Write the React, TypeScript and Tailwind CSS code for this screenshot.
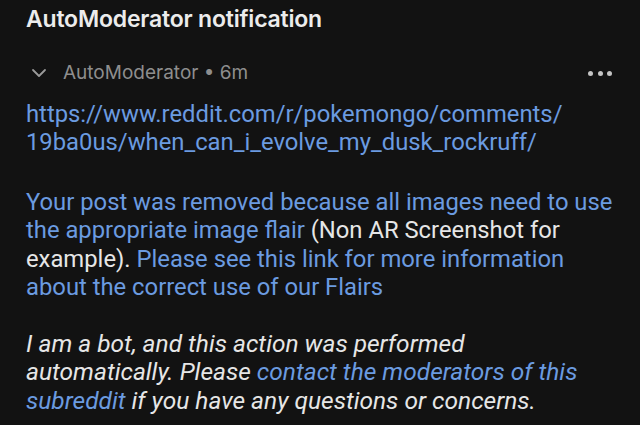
import React from "react";

export default function App() {
  const link = "text-[#6b9be0]";
  return (
    <div className="w-[640px] h-[425px] overflow-hidden bg-[#121212] text-[#e6e6e6] pl-[26px]" style={{ fontFamily: "Inter, 'Noto Sans', sans-serif" }}>
      <div className="pt-[5px] text-[23px] font-semibold leading-[28px] tracking-[-0.2px] text-[#ececec]">AutoModerator notification</div>
      <div className="mt-[28px] flex items-center h-[24px] pr-[28px] text-[19px] text-[#8e8e8e]">
        <svg width="16" height="10" viewBox="0 0 16 10" className="ml-[5px] mr-[16px]" fill="none" stroke="#9a9a9a" strokeWidth="1.8" strokeLinecap="round" strokeLinejoin="round">
          <path d="M2 2l6 6 6-6" />
        </svg>
        <span>AutoModerator • 6m</span>
        <div className="ml-auto flex gap-[4.5px]">
          <span className="w-[5px] h-[5px] rounded-full bg-[#c4c4c4]" />
          <span className="w-[5px] h-[5px] rounded-full bg-[#c4c4c4]" />
          <span className="w-[5px] h-[5px] rounded-full bg-[#c4c4c4]" />
        </div>
      </div>
      <div className="mt-[14.5px] text-[23.8px] leading-[28.5px] whitespace-nowrap" style={{ fontFamily: "Roboto, Inter, sans-serif" }}>
        <p className={link}>https://www.reddit.com/r/pokemongo/comments/<br />19ba0us/when_can_i_evolve_my_dusk_rockruff/</p>
        <p className="mt-[31px]">
          <span className={link}>Your post was removed because all images need to use<br />the appropriate image flair</span> (Non AR Screenshot for<br />example). <span className={link}>Please see this link for more information<br />about the correct use of our Flairs</span>
        </p>
        <p className="mt-[28px] italic text-[24.5px]">
          I am a bot, and this action was performed<br />automatically. Please <span className={link}>contact the moderators of this<br />subreddit</span> if you have any questions or concerns.
        </p>
      </div>
    </div>
  );
}
